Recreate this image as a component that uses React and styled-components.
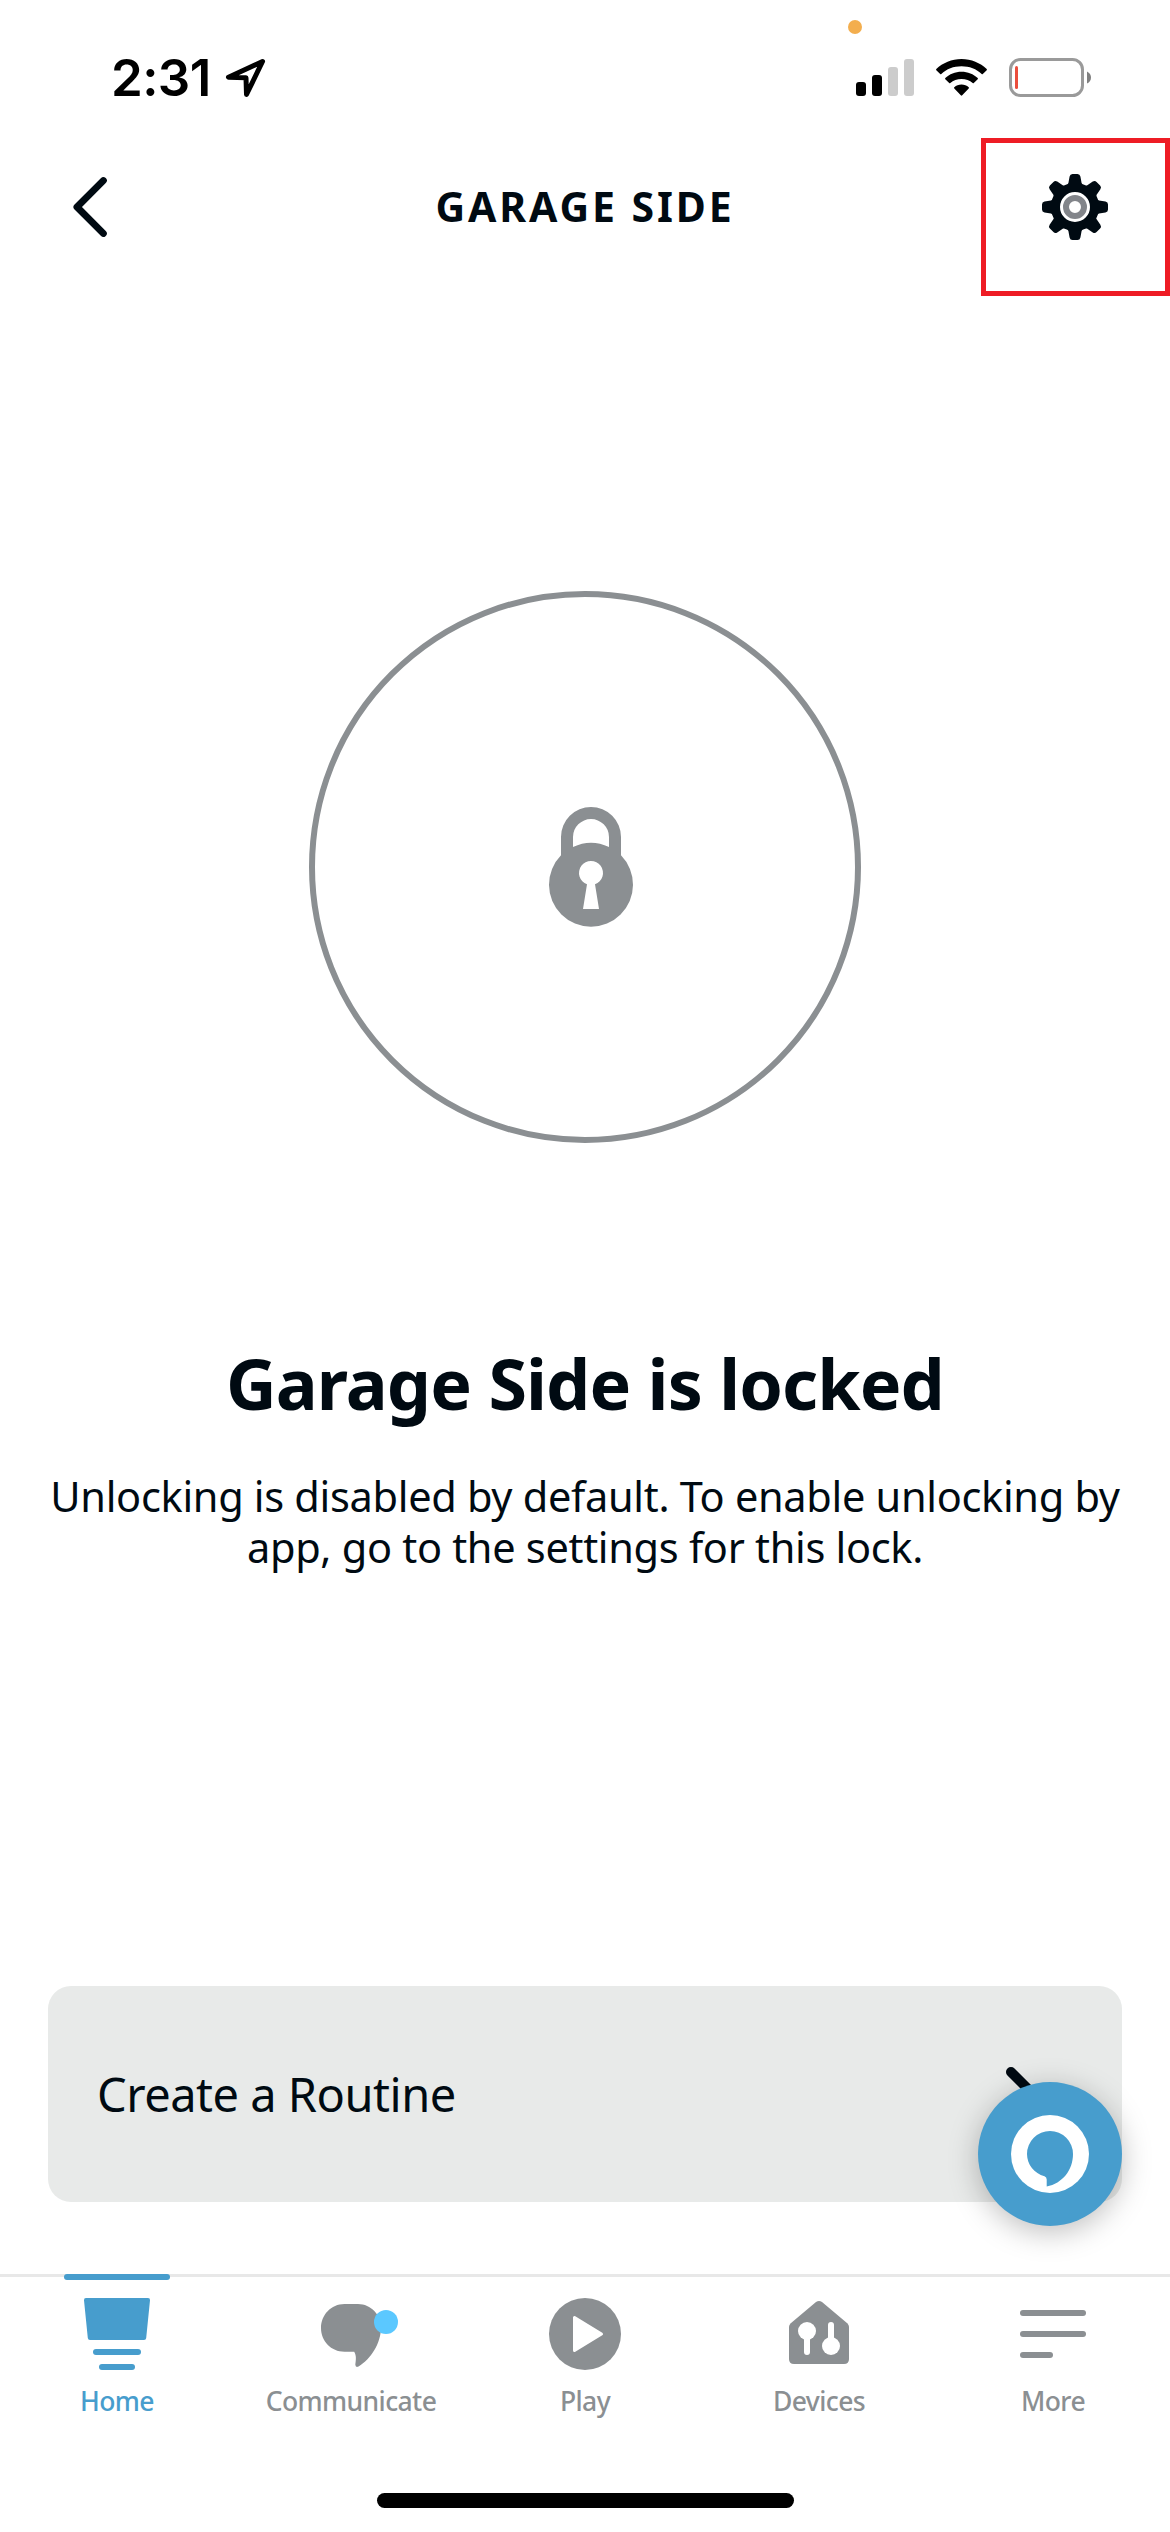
import React from 'react';
import styled, { createGlobalStyle } from 'styled-components';

const ink = '#000a12';
const gray = '#8b8f92';
const blue = '#479dcd';

const GlobalStyle = createGlobalStyle`
    * {
        box-sizing: border-box;
    }
    body {
        margin: 0;
        background: #fff;
    }
    svg {
        display: block;
        overflow: visible;
    }
`

const Screen = styled.div`
    width: 1170px;
    height: 2532px;
    display: flex;
    flex-direction: column;
    position: relative;
    overflow: hidden;
    background: #fff;
    color: ${ink};
    font-family: 'Noto Sans', 'Open Sans', sans-serif;
`

const StatusBar = styled.div`
    height: 138px;
    padding: 58px 79px 0 111px;
    display: flex;
    justify-content: space-between;
    align-items: flex-start;
    color: #000;
`

const StatusGroup = styled.div`
    height: 39px;
    display: flex;
    align-items: center;
    gap: ${(props)=>props.$gap}px;
`

const Time = styled.span`
    width: 97px;
    font-family: Inter, sans-serif;
    font-size: 51px;
    font-weight: 600;
    line-height: 39px;
    letter-spacing: -0.6px;
    white-space: nowrap;
`

const RecordingDot = styled.div`
    position: absolute;
    top: 20px;
    left: 848px;
    width: 14px;
    height: 14px;
    border-radius: 50%;
    background: #f3ae4e;
`

const Header = styled.header`
    height: 158px;
    display: grid;
    grid-template-columns: 189px 1fr 189px;
`

const BackButton = styled.div`
    padding: 39px 0 0 73px;
`

const Title = styled.h1`
    margin: 0;
    padding-top: 38px;
    text-align: center;
    font-size: 41px;
    font-weight: 700;
    line-height: 60px;
    letter-spacing: 2.9px;
    white-space: nowrap;
`

const SettingsButton = styled.div`
    border: 5px solid #ee1c25;
    padding: 31px 0 0 56px;
`

const Main = styled.main`
    flex: 1;
    padding: 295px 48px 0;
    display: flex;
    flex-direction: column;
    align-items: center;
`

const LockRing = styled.div`
    width: 552px;
    height: 552px;
    flex: none;
    border: 6px solid ${gray};
    border-radius: 50%;
    padding: 210px 0 0 234px;
`

const LockState = styled.h2`
    margin: 192px 0 0;
    font-size: 70px;
    font-weight: 700;
    line-height: 96px;
    letter-spacing: -0.9px;
    white-space: nowrap;
`

const LockHint = styled.p`
    margin: 40px -20px 0;
    text-align: center;
    font-size: 41.5px;
    line-height: 51px;
    letter-spacing: -0.3px;
    white-space: nowrap;
`

const RoutineCard = styled.div`
    height: 216px;
    margin: 0 48px 72px;
    padding: 0 80px 0 49px;
    display: flex;
    align-items: center;
    justify-content: space-between;
    border-radius: 23px;
    background: #e8eae9;
`

const RoutineLabel = styled.span`
    font-size: 47px;
    line-height: 64px;
    letter-spacing: -0.5px;
    white-space: nowrap;
`

const AlexaButton = styled.div`
    position: absolute;
    top: 2082px;
    left: 978px;
    width: 144px;
    height: 144px;
    padding: 33px;
    border-radius: 50%;
    background: ${blue};
    box-shadow: 0 6px 30px rgba(0, 0, 0, 0.26);
`

const TabBar = styled.nav`
    height: 219px;
    flex: none;
    display: grid;
    grid-template-columns: repeat(5, 1fr);
    border-top: 3px solid #e8e8e8;
`

const Tab = styled.div`
    display: flex;
    flex-direction: column;
    align-items: center;
    color: ${(props)=>props.$active ? blue : gray};
`

const Indicator = styled.div`
    width: 106px;
    height: 6px;
    margin: -3px 0 18px;
    border-radius: 3px;
    background: ${(props)=>props.$active ? blue : 'transparent'};
`

const TabLabel = styled.span`
    margin-top: 13px;
    font-size: 26.5px;
    font-weight: 500;
    line-height: 37px;
    letter-spacing: -0.6px;
    white-space: nowrap;
`

const HomeBar = styled.div`
    width: 417px;
    height: 15px;
    flex: none;
    margin: 0 0 24px 377px;
    border-radius: 8px;
    background: #000;
`

const LocationIcon = () => (
    <svg width="39" height="39" viewBox="0 0 39 39" fill="none" stroke="#000" strokeWidth="5" strokeLinejoin="round">
        <path d="M36.500 3.500 2.500 19.300 20 19.800 20.500 36.500Z" />
    </svg>
)

const SignalIcon = () => (
    <svg width="58" height="39" viewBox="0 0 58 39">
        <rect x="0" y="24" width="10" height="14" rx="3" />
        <rect x="16" y="17" width="10" height="21" rx="3" />
        <rect x="32" y="9" width="10" height="29" rx="3" fill="#ccc" />
        <rect x="48" y="1" width="10" height="37" rx="3" fill="#ccc" />
    </svg>
)

const WifiIcon = () => (
    <svg width="51" height="39" viewBox="0 0 51 39">
        <path d="M25.500 1C35.300 1 44.200 4.800 50.700 11.100Q51.200 11.600 50.700 12.200L46.800 16Q46.300 16.500 45.700 16C40.500 11 33.400 8.300 25.500 8.300S10.500 11 5.300 16Q4.700 16.500 4.200 16L.3 12.200Q-.2 11.600 .3 11.100C6.800 4.800 15.700 1 25.500 1Z" />
        <path d="M25.500 13.800C31.800 13.800 37.500 16.200 41.700 20.100Q42.200 20.600 41.700 21.200L37.800 25Q37.300 25.500 36.700 25C33.700 22.400 29.800 20.900 25.500 20.900S17.300 22.400 14.300 25Q13.700 25.500 13.200 25L9.300 21.200Q8.800 20.600 9.300 20.100C13.500 16.200 19.200 13.800 25.500 13.800Z" />
        <path d="M25.500 26.500C28.300 26.500 30.800 27.500 32.700 29.200Q33.300 29.800 32.700 30.400L26.200 37.300Q25.500 38 24.800 37.300L18.300 30.400Q17.700 29.800 18.300 29.200C20.200 27.500 22.700 26.500 25.500 26.500Z" />
    </svg>
)

const BatteryIcon = () => (
    <svg width="82" height="39" viewBox="0 0 82 39">
        <rect x="1.500" y="1.500" width="72" height="36" rx="10" fill="none" stroke="#9a9a9a" strokeWidth="3" />
        <rect x="6" y="8" width="3" height="23" rx="1.500" fill="#eb4e3d" />
        <path d="M78 13.500Q82 15.500 82 19.500T78 25.500Z" fill="#808080" />
    </svg>
)

const BackIcon = () => (
    <svg width="34" height="60" viewBox="0 0 34 60" fill="none" stroke={ink} strokeWidth="7" strokeLinecap="round" strokeLinejoin="round">
        <path d="M30.300 3.600 4 30 30.300 56.400" />
    </svg>
)

const GearIcon = () => (
    <svg width="66" height="66" viewBox="-33 -33 66 66">
        <circle r="19.500" fill="none" stroke={ink} strokeWidth="9" />
        {[0, 45, 90, 135, 180, 225, 270, 315].map((angle)=>(
            <path
                key={angle}
                transform={`rotate(${angle})`}
                fill={ink}
                d="M-2.500-33H2.500Q4.900-33 5.400-30.500L6.600-24Q7-22.200 9.500-21.500L8-18H-8L-9.500-21.500Q-7-22.200-6.600-24L-5.400-30.500Q-4.900-33-2.500-33Z"
            />
        ))}
        <circle r="9" fill="none" stroke="#82858a" strokeWidth="6" />
    </svg>
)

const LockIcon = () => (
    <svg width="84" height="120" viewBox="0 0 84 120">
        <path
            fill={gray}
            fillRule="evenodd"
            d="M12 48.300V30A30 30 0 0 1 72 30V48.300A42 42 0 1 1 12 48.300ZM24 40V30A18 18 0 0 1 60 30V40A42 42 0 0 0 24 40ZM38 77.300 34 102H50L46 77.300A12 12 0 1 0 38 77.300Z"
        />
    </svg>
)

const ChevronIcon = () => (
    <svg width="36" height="70" viewBox="0 0 36 70" fill="none" stroke={ink} strokeWidth="10" strokeLinecap="round" strokeLinejoin="round">
        <path d="M5 13 27 35 5 57" />
    </svg>
)

const AlexaIcon = () => (
    <svg width="78" height="78" viewBox="-39 -39 78 78">
        <circle r="39" fill="#fff" />
        <path fill={blue} d="M-3.300 32.500V25.500Q-3.300 23-5.500 22.300C-15.800 19.500-23 10.500-23 0A23 23 0 0 1 23 0C23 16 12.500 29.500-3.300 32.500Z" />
    </svg>
)

const HomeIcon = () => (
    <svg width="72" height="72" viewBox="0 0 72 72" fill="currentColor">
        <path d="M5 0H67Q69.200 0 69 2.200L65.200 40Q65 42 63 42H9Q7 42 6.800 40L3 2.200Q2.800 0 5 0Z" />
        <rect x="12" y="51" width="48" height="6" rx="3" />
        <rect x="18" y="66" width="36" height="6" rx="3" />
    </svg>
)

const CommunicateIcon = () => (
    <svg width="72" height="72" viewBox="0 0 72 72" fill="currentColor">
        <path d="M29.500 6H43C56 6 66 17 66 29.500C66 45 56 61 43.500 68.500Q40.500 70 40.300 66.500C41 61.500 41.500 57.500 39.200 53.700H29.500C16 53.700 6 43 6 30S16 6 29.500 6Z" />
        <circle cx="71" cy="24" r="12" fill="#5bc8ff" />
    </svg>
)

const PlayIcon = () => (
    <svg width="72" height="72" viewBox="0 0 72 72" fill="currentColor">
        <circle cx="36" cy="36" r="36" />
        <path d="M25.500 19.500V52.500L52.500 36Z" fill="#fff" stroke="#fff" strokeWidth="3" strokeLinejoin="round" />
    </svg>
)

const DevicesIcon = () => (
    <svg width="72" height="72" viewBox="0 0 72 72" fill="currentColor">
        <path d="M33 4Q36 2 39 4L64.500 25.500Q66 27 66 29V61Q66 66 61 66H11Q6 66 6 61V29Q6 27 7.500 25.500Z" />
        <g fill="#fff">
            <circle cx="24" cy="33" r="9" />
            <rect x="21" y="36" width="6" height="21" rx="3" />
            <circle cx="48" cy="48" r="9" />
            <rect x="45" y="24" width="6" height="21" rx="3" />
        </g>
    </svg>
)

const MoreIcon = () => (
    <svg width="72" height="72" viewBox="0 0 72 72" fill="currentColor">
        <rect x="3" y="12" width="66" height="6" rx="3" />
        <rect x="3" y="33" width="66" height="6" rx="3" />
        <rect x="3" y="54" width="33" height="6" rx="3" />
    </svg>
)

const tabs = [
    { label: 'Home', Icon: HomeIcon, active: true },
    { label: 'Communicate', Icon: CommunicateIcon },
    { label: 'Play', Icon: PlayIcon },
    { label: 'Devices', Icon: DevicesIcon },
    { label: 'More', Icon: MoreIcon },
]

export default function App(){

    return(
        <Screen>
            <GlobalStyle />
            <StatusBar>
                <StatusGroup $gap={18}>
                    <Time>2:31</Time>
                    <LocationIcon />
                </StatusGroup>
                <StatusGroup $gap={22}>
                    <SignalIcon />
                    <WifiIcon />
                    <BatteryIcon />
                </StatusGroup>
            </StatusBar>
            <RecordingDot />
            <Header>
                <BackButton><BackIcon /></BackButton>
                <Title>GARAGE SIDE</Title>
                <SettingsButton><GearIcon /></SettingsButton>
            </Header>
            <Main>
                <LockRing><LockIcon /></LockRing>
                <LockState>Garage Side is locked</LockState>
                <LockHint>
                    Unlocking is disabled by default. To enable unlocking by<br />
                    app, go to the settings for this lock.
                </LockHint>
            </Main>
            <RoutineCard>
                <RoutineLabel>Create a Routine</RoutineLabel>
                <ChevronIcon />
            </RoutineCard>
            <TabBar>
                {tabs.map(({ label, Icon, active })=>(
                    <Tab key={label} $active={active}>
                        <Indicator $active={active} />
                        <Icon />
                        <TabLabel>{label}</TabLabel>
                    </Tab>
                ))}
            </TabBar>
            <HomeBar />
            <AlexaButton><AlexaIcon /></AlexaButton>
        </Screen>
    )

}
